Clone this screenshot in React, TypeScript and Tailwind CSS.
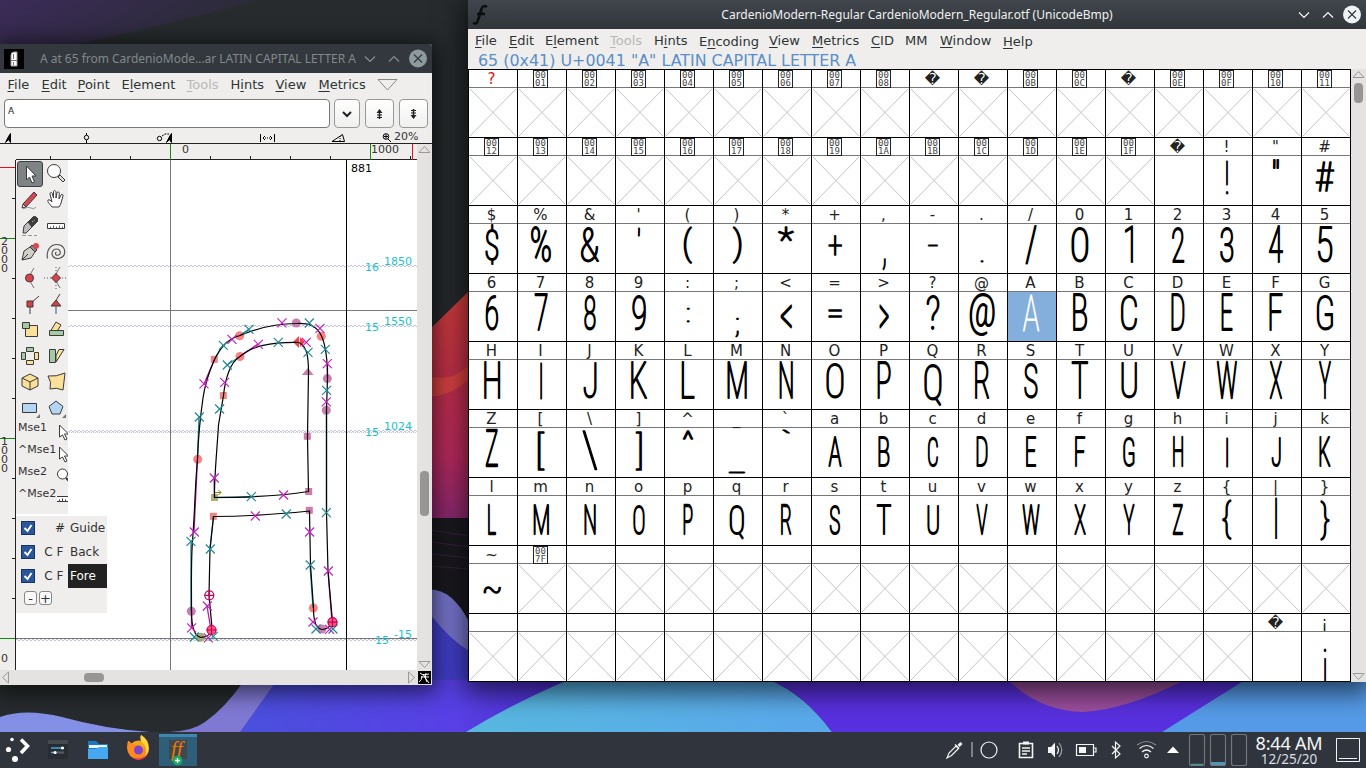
import React from "react";

type Box = { w: number; top: number; bottom: number; cx?: number };

const MENU_FONT = "font-['DejaVu_Sans',sans-serif]";

/* ---------- glyph metrics for the font overview ---------- */

const capWidths: Record<string, number> = {
  A: 17, B: 15, C: 17, D: 14, E: 12, F: 14, G: 17, H: 17, I: 2.5, J: 14, K: 17, L: 14, M: 20,
  N: 14, O: 18, P: 14, Q: 18, R: 15, S: 14, T: 17, U: 16, V: 16, W: 21, X: 13, Y: 13, Z: 13,
  "0": 18, "1": 9, "2": 13, "3": 14, "4": 15, "5": 15, "6": 13, "7": 14, "8": 12, "9": 14,
};
const smallWidths: Record<string, number> = {
  a: 14, b: 12, c: 11, d: 12, e: 11, f: 11, g: 12, h: 11, i: 2.5, j: 10, k: 12, l: 9, m: 16,
  n: 12, o: 12, p: 10, q: 15, r: 11, s: 11, t: 15, u: 12, v: 12, w: 18, x: 12, y: 12, z: 11,
};
const special: Record<string, Box> = {
  "!": { w: 3, top: 4, bottom: 39 },
  '"': { w: 7, top: 2, bottom: 12 },
  "#": { w: 19, top: 5, bottom: 36 },
  $: { w: 14, top: 1, bottom: 41 },
  "%": { w: 21, top: 1, bottom: 39 },
  "&": { w: 19, top: 3, bottom: 39 },
  "'": { w: 2.5, top: 3, bottom: 12 },
  "(": { w: 9, top: 3, bottom: 40 },
  ")": { w: 9, top: 3, bottom: 40 },
  "*": { w: 17, top: 2, bottom: 18 },
  "+": { w: 14, top: 12, bottom: 33 },
  ",": { w: 4, top: 34, bottom: 46 },
  "-": { w: 10, top: 21, bottom: 23.5 },
  ".": { w: 3, top: 35.5, bottom: 38.5 },
  "/": { w: 12, top: 1, bottom: 40 },
  ":": { w: 3, top: 16, bottom: 31 },
  ";": { w: 4, top: 26, bottom: 46 },
  "<": { w: 12, top: 13, bottom: 37 },
  "=": { w: 14, top: 17, bottom: 26 },
  ">": { w: 10, top: 13, bottom: 37 },
  "?": { w: 13, top: 2, bottom: 39 },
  "@": { w: 26, top: 1, bottom: 45 },
  Q: { w: 18, top: 3, bottom: 46 },
  q: { w: 15, top: 8.5, bottom: 44 },
  "[": { w: 7, top: 3, bottom: 43 },
  "\\": { w: 15, top: 2, bottom: 43 },
  "]": { w: 7, top: 3, bottom: 43 },
  "^": { w: 11, top: 2, bottom: 12 },
  _: { w: 17, top: 43, bottom: 45 },
  "`": { w: 8, top: 1, bottom: 6 },
  "{": { w: 10, top: 3, bottom: 44 },
  "|": { w: 2.5, top: 1, bottom: 43 },
  "}": { w: 10, top: 3, bottom: 44 },
  "~": { w: 18, top: 22, bottom: 30 },
  "¡": { w: 3, top: 16, bottom: 53 },
};

function boxFor(ch: string): Box {
  if (special[ch]) return special[ch];
  if (smallWidths[ch]) return { w: smallWidths[ch], top: 8.5, bottom: 39 };
  return { w: capWidths[ch] ?? 14, top: 2, bottom: 39 };
}

let ctx: CanvasRenderingContext2D | null = null;

function BigGlyph({ ch, light }: { ch: string; light?: boolean }) {
  const drawn = smallWidths[ch] ? ch.toUpperCase() : ch;
  const b = boxFor(ch);
  const narrow = b.w <= 4;
  const stroke = light ? 0.8 : narrow ? 1 : 1.65;
  if (!ctx) ctx = document.createElement("canvas").getContext("2d");
  ctx!.font = "100 500px 'Roboto Condensed'";
  const m = ctx!.measureText(drawn);
  const left = m.actualBoundingBoxLeft / 10;
  const right = m.actualBoundingBoxRight / 10;
  const up = m.actualBoundingBoxAscent / 10;
  const down = m.actualBoundingBoxDescent / 10;
  const sx = narrow ? 0.65 : (b.w - stroke) / Math.max(1, left + right);
  const sy = Math.max(0.8, b.bottom - b.top - stroke) / Math.max(1, up + down);
  const cx = b.cx ?? 23;
  const tx = cx - ((right - left) / 2) * sx;
  const ty = b.top + stroke / 2 + up * sy;
  const color = light ? "#ffffff" : "#000000";
  return (
    <svg width="48" height="49" className="block overflow-hidden">
      <text
        transform={`translate(${tx} ${ty}) scale(${sx} ${sy})`}
        fontFamily="'Roboto Condensed', Inter, sans-serif"
        fontWeight="100"
        fontSize="50"
        fill={color}
        stroke={color}
        strokeWidth={stroke / Math.sqrt(sx * sy)}
        strokeLinejoin="round"
      >
        {drawn}
      </text>
    </svg>
  );
}

function Cross() {
  return (
    <svg width="48" height="49" className="block" stroke="#c4c4c4" strokeWidth="1">
      <path d="M1 1L47 48M47 1L1 48" />
    </svg>
  );
}

/* ---------- font overview cells ---------- */

type Cell = { label: string; kind: "hex" | "char" | "none"; glyph?: string; red?: boolean };

function cellFor(row: number, col: number): Cell {
  const code = row * 18 + col;
  if (row === 8) {
    if (col === 16) return { label: "\uFFFD", kind: "char", glyph: " " };
    if (col === 17) return { label: "¡", kind: "char", glyph: "¡" };
    return { label: "", kind: "none" };
  }
  if (code === 0) return { label: "?", kind: "char", red: true };
  if (code === 9 || code === 10 || code === 13) return { label: "\uFFFD", kind: "char" };
  if (code === 32) return { label: "\uFFFD", kind: "char", glyph: " " };
  if (code < 32 || code === 127) return { label: code.toString(16).toUpperCase().padStart(2, "0"), kind: "hex" };
  if (code < 127) return { label: String.fromCharCode(code), kind: "char", glyph: String.fromCharCode(code) };
  return { label: "", kind: "none" };
}

function FontCell({ row, col }: { row: number; col: number }) {
  const c = cellFor(row, col);
  const selected = c.glyph === "A";
  return (
    <div className="h-[68px] w-[49px] border-t border-r border-black">
      <div className="flex h-[17px] w-[45px] items-start justify-center">
        {c.kind === "hex" && (
          <span className="relative flex h-[18px] w-[15px] shrink-0 flex-col items-center justify-center border border-[#222] font-['DejaVu_Sans_Mono',monospace] text-[9px] leading-[8px] text-[#444]">
            <span>00</span>
            <span>{c.label}</span>
          </span>
        )}
        {c.kind === "char" && (
          <span className={`${MENU_FONT} text-[15px] leading-[18px] ${c.red ? "text-[#e01010]" : "text-[#222]"}`}>{c.label}</span>
        )}
      </div>
      <div className={`h-[50px] border-t border-[#777] ${selected ? "bg-[#84aedb]" : ""}`}>
        {c.glyph === undefined ? <Cross /> : c.glyph === " " ? null : <BigGlyph ch={c.glyph} light={selected} />}
      </div>
    </div>
  );
}

/* ---------- shared window parts ---------- */

function MenuItem({ text, u, cls, off, low }: { text: string; u: number; cls: string; off?: boolean; low?: boolean }) {
  return (
    <span className={`${MENU_FONT} ${cls} shrink-0 text-[13px] leading-[23px] whitespace-nowrap ${off ? "text-[#b9b8b7]" : "text-[#2e3436]"} ${low ? "pt-px" : ""}`}>
      {text.slice(0, u)}
      <span className={u >= 0 && u < text.length ? "underline decoration-1 underline-offset-2" : ""}>{text.slice(u, u + 1)}</span>
      {text.slice(u + 1)}
    </span>
  );
}

function TitleButtons({ dim }: { dim?: boolean }) {
  const c = dim ? "#8a9094" : "#fcfcfc";
  return (
    <svg width="72" height="24" className="shrink-0" fill="none" stroke={c} strokeWidth="1.1">
      <path d="M7 9.500l5 5 5-5M31 14.500l5-5 5 5" />
      <circle cx="60" cy="11.500" r="9" fill={dim ? "#8f9a9e" : "#eff3f6"} stroke="none" />
      <path d="M56 7.500l8 8M64 7.500l-8 8" stroke="#30363a" />
    </svg>
  );
}

/* ---------- tool palette ---------- */

const O = "#3a3a3a";
const toolIcons: React.ReactNode[] = [
  <path d="M8.500 4v14l3-3 2.500 6 2.500-1-2.500-6h4z" fill="#fff" stroke={O} />,
  <g stroke={O}><circle cx="10" cy="9" r="6.500" fill="#fff" /><path d="M14 15l2-2 5 5-2 2z" fill="#ddd" /></g>,
  <g stroke={O}><path d="M5 16L16 4l3 3L8 19z" fill="#d94850" /><path d="M5 16l3 3-4 1z" fill="#fbe6c0" /><path d="M5 21q5-3 8-1t5-1" fill="none" stroke="#8a97aa" /></g>,
  <path d="M8 19c-2-3-5-5-4-7 1-1 3 1 4 2L6 6c0-2 2-2 2.500 0l1 4V4c0-2 2-2 2.500 0v6l1-5c.5-2 2.500-1 2.300.5L15 11l2-4c1-1.500 2.500-.5 2 1-1.500 4-1.500 8-4 11z" fill="#fff" stroke={O} />,
  <g stroke={O}><path d="M5 19l1-7 9-9c3-1 5 1 4.500 4L12 15l-4 4z" fill="#bdbdbd" /><path d="M10 8l5-5c3-1 5 1 4.500 4L14 13z" fill="#3c3c3c" /><path d="M14 8l3-2" stroke="#ccc" strokeDasharray="1 1" /><path d="M4 21.500h15" stroke="#999" strokeDasharray="4 2" /></g>,
  <g stroke={O}><path d="M3.500 9.500h17v5h-17z" fill="#fff" /><path d="M6.500 12.500v2M9.500 11.500v3M12.500 12.500v2M15.500 11.500v3M18.500 12.500v2" strokeWidth=".8" /></g>,
  <g stroke={O}><path d="M4 20l2-9 6-4 5 5-4 6z" fill="#d0d0c8" /><path d="M4 20l6-6" /><path d="M12 7l5 5 2-2-5-5z" fill="#888" /><circle cx="18" cy="6" r="3" fill="#d94850" stroke="none" /></g>,
  <path d="M3.500 18.500C2 11 6 4.500 13 4.500c6 0 8.500 5 7.500 9-1 5-8 6.500-11 3.500s-1-8 3-8 5 5 2 6-4-2-2-3" fill="none" stroke="#555" strokeWidth="1.200" />,
  <g stroke={O} fill="none"><path d="M16 2q-8 10 0 20" stroke="#777" /><circle cx="11.500" cy="12" r="4" fill="#e0404c" /></g>,
  <g stroke={O} fill="none"><path d="M16 1q-8 10 0 21" stroke="#777" /><path d="M0 12h24M12 1v22" stroke="#555" strokeDasharray="1 2" /><path d="M12 7.500l4.500 4.500-4.500 4.500L7.500 12z" fill="#e0404c" /></g>,
  <g stroke={O} fill="none"><path d="M12 12v10M12 12l9-8" /><path d="M9 9h6v6H9z" fill="#d83c48" /></g>,
  <g stroke={O} fill="none"><path d="M12 12v10" stroke="#27548c" /><path d="M12 12q0-6 4-10" /><path d="M12 8l5 6H7z" fill="#d83c48" /></g>,
  <g stroke={O}><path d="M7.500 7.500h12v11h-12z" fill="#fbe09a" /><path d="M4.500 4.500h7v6h-7z" fill="#a5cba5" /></g>,
  <g stroke={O}><path d="M6 14l6-10 5 3-5 8z" fill="#fbe09a" /><path d="M5.500 12.500h14v5h-14z" fill="#a5cba5" /></g>,
  <g stroke={O}><path d="M8.500 3.500h7v4h-7zM3.500 8.500h4v7h-4z" fill="#a5cba5" /><path d="M16.500 8.500h4v7h-4zM8.500 16.500h7v4h-7z" fill="#fbe09a" /></g>,
  <g stroke={O}><path d="M5.500 5.500h6v13h-6z" fill="#a5cba5" /><path d="M12 18l8-12.500h-5l-3 6z" fill="#fbe09a" /></g>,
  <g stroke={O}><path d="M12 4l8 4v8l-8 4-8-4V8z" fill="#fbe09a" /><path d="M4 8l8 4 8-4M12 12v8" fill="none" /></g>,
  <path d="M4 6q8 1 17-3l-2 17q-7-3-13-1 2-7-2-13z" fill="#fbe09a" stroke={O} />,
  <g><path d="M4.500 7.500h14v9h-14z" fill="#b4d6f5" stroke={O} /><path d="M22 18v4h-4z" fill="#777" /></g>,
  <g><path d="M12 5l7 5.500-3 7.500H8l-3-7.500z" fill="#b4d6f5" stroke={O} /><path d="M22 18v4h-4z" fill="#777" /></g>,
];

function ToolPalette() {
  return (
    <div className="h-[354px] w-[52px] overflow-hidden bg-[#efeeed] pt-px">
      <div className="grid grid-cols-2 pl-px">
        {toolIcons.map((icon, i) => (
          <div key={i} className={`flex h-[26px] w-[26px] items-center justify-center rounded-[3px] ${i === 0 ? "border border-[#3a3e42] bg-[#7e8386]" : ""}`}>
            <svg width="24" height="24" viewBox="0 0 24 24" className="shrink-0">{icon}</svg>
          </div>
        ))}
      </div>
      {["Mse1", "^Mse1", "Mse2", "^Mse2"].map((t, i) => (
        <div key={t} className="flex h-[22px] w-[60px] items-start pl-[2px]">
          <span className={`${MENU_FONT} w-[39px] shrink-0 text-[11px] leading-[14px] text-[#333]`}>{t}</span>
          <svg width="18" height="20" viewBox="0 0 18 20" className="shrink-0" fill="#fff" stroke="#3a3a3a">
            {i < 2 && <path d="M2.500 4v12l3-2 2.500 5 2-1-2.500-5h4z" />}
            {i === 2 && <><circle cx="5.500" cy="9" r="5" /><path d="M9 13l5 5" strokeWidth="2" /></>}
            {i === 3 && <path d="M-.5 9.500h16v5h-16zM2.500 12.500v2M5.500 11.500v3M8.500 12.500v2" />}
          </svg>
        </div>
      ))}
    </div>
  );
}

function LayerPalette() {
  const rows = [["", "#", "Guide"], ["C", "F", "Back"], ["C", "F", "Fore"]];
  return (
    <div className={`${MENU_FONT} h-[97px] w-[91px] bg-[#efeeed] text-[12px] text-[#333]`}>
      {rows.map(([a, b, c]) => (
        <div key={c} className="flex h-[24px] items-center pl-[5px]">
          <svg width="14" height="14" className="shrink-0">
            <rect x=".5" y=".5" width="13" height="13" fill="#2a5599" stroke="#17345f" />
            <path d="M3.500 7l3 3 4-6" fill="none" stroke="#fff" strokeWidth="2" />
          </svg>
          <span className="ml-[7px] w-[13px] text-center">{a}</span>
          <span className="w-[10px] text-center">{b}</span>
          <span className={`ml-[3px] flex h-[24px] w-[39px] items-center pl-[2px] whitespace-nowrap ${c === "Fore" ? "bg-[#222] text-white" : ""}`}>{c}</span>
        </div>
      ))}
      <div className="flex gap-[2px] pt-[3px] pl-[8px]">
        {["-", "+"].map((s) => (
          <span key={s} className="flex h-[14px] w-[13px] items-center justify-center rounded-[3px] border border-[#888] bg-[#f8f8f8] text-[13px] leading-none">{s}</span>
        ))}
      </div>
    </div>
  );
}

/* ---------- outline canvas (drawn in desktop coordinates) ---------- */

const magentaX = [[281.7,322.5],[319.7,328],[231.7,339],[258,344],[203.7,383.5],[224.3,382],[327,363.3],[326,401.5],[306,342],[214,477.7],[283.3,494.7],[255,515.7],[194,531.7],[309.3,531.7],[328,570.7],[207,605.7],[191.3,627.5],[312.7,621.7],[208,637.5],[329.3,629]];
const tealX = [[248.7,329],[309,322.7],[223,345],[227,364.7],[278,342],[307.7,352],[325,349],[326.3,390],[199,416.7],[219.3,408.7],[251,496.3],[286,513.7],[190.7,541],[210,548.7],[310,564.7],[326,512.3],[194,636.7],[213,636],[315.7,628.7],[332.7,628.7]];
const redDots = [[239.7,335.7],[240,356.5],[321.3,336.3],[197.7,459.3],[313.3,608]];
const pinkDots = [[296.3,323],[327.3,378.6],[326.3,410.3],[191.3,611.3],[322,629]];
const redSq = [[214.3,359.3],[223.3,395.5],[213.3,516.3]];
const pinkSq = [[307.3,436.3],[308.7,491.5],[309.3,510.3]];

function Canvas() {
  return (
    <svg width="401" height="510" viewBox="16 160 401 510" className="block bg-white">
      <g shapeRendering="crispEdges" fill="none">
        {[266, 326, 431, 639].map((y) => (
          <g key={y}>
            <path d={`M16 ${y + 0.5}H417`} stroke="#c4c4e0" strokeDasharray="2 2" />
            <path d={`M18 ${y + (y === 639 ? 1.5 : -0.5)}H417`} stroke="#c4c4e0" strokeDasharray="2 2" />
          </g>
        ))}
        <path d="M17 432.500H417" stroke="#c4c4e0" strokeDasharray="1 1" />
        <path d="M16 310.500H417M16 638.500H417M170.500 160V670" stroke="#777" />
        <path d="M346.500 160V670" stroke="#000" />
      </g>
      {redSq.map(([x, y], i) => <rect key={i} x={x - 3.5} y={y - 3.5} width="7" height="7" fill="#f08585" />)}
      {pinkSq.map(([x, y], i) => <rect key={i} x={x - 3.5} y={y - 3.5} width="7" height="7" fill="#cf7bad" />)}
      <rect x="211" y="494" width="7" height="7" fill="#b1b072" />
      {redDots.map(([x, y], i) => <circle key={i} cx={x} cy={y} r="4.500" fill="#ff8080" />)}
      {pinkDots.map(([x, y], i) => <circle key={i} cx={x} cy={y} r="4.500" fill="#cd7db0" />)}
      <circle cx="200.500" cy="637.300" r="4.500" fill="#a9a878" />
      <path d="M307.700 368l6 7h-12z" fill="#cd7db0" />
      <path d="M299 336l6 6-6 6-6-6z" fill="#f33f50" />
      <path d="M299.500 336v12" stroke="#fff" />
      <g fill="none" strokeWidth="1.300">
        <path d="M214.500 359.500L204 384M258 344L240 356.500M214.500 497L214 478M197.500 459L194 532M328 571L332 622M207 606L211 630M191.500 611V627M327.500 378V363" stroke="#b51aa8" />
        <path d="M240 335.500L249 329M214.500 359.500L223 345M240 356.500L227 365M199 417L197.500 459M191 541V611M326.500 410V512M214.500 497.500L251 497M310 565L313 608M213.500 516.500L210 549" stroke="#178b96" />
      </g>
      <g fill="none" stroke="#000" strokeWidth="1.200">
        <path d="M191.500 611C191.500 580 191 560 192.500 541C195 510 195 485 197.500 459C198.500 430 201 412 203 398C205 384 209 372 214.500 359.500C221 346 230 338 240 335.500C260 327 280 323.500 296.500 323.500C309 323 317 326 321.500 336C326 346 327.500 360 327.500 378L326.500 410V512L328 571L332.500 622C330 627 327 629.500 322 629.500C316 628 313.500 622 313.500 608L310.500 565L309.500 511C280 514 250 516.500 213.500 516.500L210 549L209 595L212 628C211 635 207 637.500 200.500 637.300C194 636 191.500 625 191.500 611Z" />
        <path d="M214.500 497.500C214 480 217 450 218.500 425L223.500 395.500C225 380 230 362 240 356.500C252 346 270 342 299 342.500C306 346 308.500 354 308.500 372L307.500 437L308.500 491.500C280 496 250 497.500 214.500 497.500Z" />
      </g>
      <g stroke="#c51fc0" strokeWidth="1.150">{magentaX.map(([x, y], i) => <path key={i} d={`M${x - 4.2} ${y - 4.2}l9 9m0-9l-9 9`} />)}</g>
      <g stroke="#1e8796" strokeWidth="1.150">{tealX.map(([x, y], i) => <path key={i} d={`M${x - 4.2} ${y - 4.2}l9 9m0-9l-9 9`} />)}</g>
      <g stroke="#c40062" strokeWidth="1.200">
        <circle cx="209.300" cy="595.300" r="4.500" fill="none" />
        <circle cx="211.500" cy="630" r="4.500" fill="#ff5a78" />
        <circle cx="332.500" cy="622.200" r="4.500" fill="#ff5a78" />
        <path d="M204.500 595.300h9.600M209.300 590.500v9.600M206.500 630h10M211.500 625v10M327.500 622.200h10M332.500 617v10" />
      </g>
      <path d="M215 492.500h6m-2.500-2.500l2.500 2.500-2.500 2.500" stroke="#8a8400" fill="none" />
      <g fontFamily="DejaVu Sans" fontSize="11" fill="#19c3cc">
        <text x="365" y="271">16</text><text x="384" y="265">1850</text>
        <text x="365" y="331">15</text><text x="384" y="325">1550</text>
        <text x="365" y="436">15</text><text x="384" y="430">1024</text>
        <text x="375" y="644">15</text><text x="394" y="638">-15</text>
        <text x="351" y="172" fill="#000">881</text>
      </g>
    </svg>
  );
}

function TopRuler() {
  return (
    <svg width="417" height="16" viewBox="0 144 417 16" className="block" shapeRendering="crispEdges">
      <path d="M16 159.500H417M50.500 156v3M90.500 156v3M130.500 156v3M210.500 156v3M250.500 156v3M290.500 156v3M330.500 156v3M410.500 156v3" stroke="#222" />
      <path d="M170.500 144v16M370.500 144v16" stroke="#118a11" />
      <path d="M412.500 144v16" stroke="#e01020" />
      <g fontFamily="DejaVu Sans" fontSize="11" fill="#333"><text x="182" y="153">0</text><text x="371" y="153">1000</text></g>
    </svg>
  );
}

function SideRuler() {
  return (
    <svg width="16" height="510" viewBox="0 160 16 510" className="block" shapeRendering="crispEdges">
      <path d="M15.500 160V670M12 198.500h3M12 278.500h3M12 318.500h3M12 358.500h3M12 398.500h3M12 478.500h3M12 518.500h3M12 558.500h3M12 598.500h3" stroke="#222" />
      <path d="M0 238.500h15M0 438.500h15M0 638.500h15" stroke="#118a11" />
      <path d="M0 167.500h15" stroke="#e01020" />
      <g fontFamily="DejaVu Sans" fontSize="11" fill="#333">
        <text x="1" y="245">2</text><text x="1" y="254">0</text><text x="1" y="263">0</text><text x="1" y="272">0</text>
        <text x="1" y="445">1</text><text x="1" y="454">0</text><text x="1" y="463">0</text><text x="1" y="472">0</text>
        <text x="1" y="662">0</text>
      </g>
    </svg>
  );
}

function InfoStrip() {
  return (
    <div className="flex h-[16px] shrink-0 border-b border-[#222]">
      <svg width="392" height="15" viewBox="0 128 392 15" className="block shrink-0" fill="none" stroke="#000">
        <path d="M10.500 133.500v9l-2-3-3 3 3-6z" fill="#000" />
        <path d="M86.500 133v2M86.500 140v3" /><circle cx="86.500" cy="137.500" r="2.200" />
        <circle cx="159.500" cy="138.500" r="2.200" /><path d="M162 136l3-2h4" strokeDasharray="2 1" /><path d="M171.500 133.500v9l-2-3-3 3 3-6z" fill="#000" />
        <path d="M260.500 134v8M274.500 134v8" /><path d="M263 138h10" strokeDasharray="1 1" /><path d="M265 136l-2 2 2 2M270 136l2 2-2 2" />
        <path d="M332 141.500h12.500l-2-7z" /><path d="M340 136v5" strokeDasharray="1 1" />
        <circle cx="386" cy="136.500" r="2.800" /><path d="M384 136.500h4M386 134.500v4M388 139l3 3" />
      </svg>
      <span className={`${MENU_FONT} ml-[2px] pt-[2px] text-[11px] leading-[14px] text-[#333]`}>20%</span>
    </div>
  );
}

function GlyphWindow() {
  const btn = "flex h-[29px] items-center justify-center rounded-[4px] border border-[#9a9996] bg-gradient-to-b from-white to-[#f0f0ef]";
  return (
    <div className="absolute top-[44px] left-0 flex h-[641px] w-[432px] flex-col overflow-hidden rounded-tr-[3px] bg-[#efeeec] shadow-[0_3px_22px_5px_rgba(0,0,0,0.6)]">
      <div className="flex h-[29px] shrink-0 items-center bg-[#32383d] pl-[4px]">
        <svg width="20" height="20" className="shrink-0"><rect width="20" height="20" fill="#000" /><path d="M7 17V6q0-3 3-3h3v14z" fill="#fff" stroke="#999" /><path d="M9.500 5v5M9.500 13v3M7 11.500h6" stroke="#777" /></svg>
        <span className="ml-[16px] w-[318px] shrink-0 font-['Noto_Sans',sans-serif] text-[12px] leading-[20px] tracking-[-0.02px] whitespace-nowrap text-[#82888c]">A at 65 from CardenioMode...ar LATIN CAPITAL LETTER A</span>
        <TitleButtons dim />
      </div>
      <div className="flex h-[24px] shrink-0 pl-[7.5px]">
        <MenuItem text="File" u={0} cls="w-[34px]" />
        <MenuItem text="Edit" u={0} cls="w-[36px]" />
        <MenuItem text="Point" u={0} cls="w-[44px]" />
        <MenuItem text="Element" u={1} cls="w-[65px]" />
        <MenuItem text="Tools" u={0} cls="w-[44px]" off />
        <MenuItem text="Hints" u={1} cls="w-[45px]" />
        <MenuItem text="View" u={0} cls="w-[43px]" />
        <MenuItem text="Metrics" u={0} cls="w-[57.5px]" />
        <svg width="24" height="22" fill="none" stroke="#888"><path d="M2 6.500h19l-9.500 10.500z" /></svg>
      </div>
      <div className="flex h-[31px] shrink-0 items-start gap-[4px] pt-[2px] pl-[4px]">
        <div className={`${MENU_FONT} h-[29px] w-[326px] rounded-[4px] border border-[#777] bg-white pl-[3px] text-[9px] leading-[22px] text-[#222]`}>A</div>
        <div className={`${btn} w-[26px]`}><svg width="12" height="12" fill="none" stroke="#222" strokeWidth="2"><path d="M2 4l4 4 4-4" /></svg></div>
        <div className={`${btn} ml-[1px] w-[29px]`}><svg width="9" height="12" fill="none" stroke="#222"><path d="M4.500 2v9" strokeWidth="1.500" /><path d="M1.500 5h6l-3-4z" fill="#222" stroke="none" /><path d="M2 7h5M2 9.500h5" /></svg></div>
        <div className={`${btn} ml-[1px] w-[29px]`}><svg width="9" height="12" fill="none" stroke="#222"><path d="M4.500 1v9" strokeWidth="1.500" /><path d="M1.500 7h6l-3 4z" fill="#222" stroke="none" /><path d="M2 2.500h5M2 5h5" /></svg></div>
      </div>
      <InfoStrip />
      <div className="flex h-[526px] shrink-0">
        <div className="w-[417px]">
          <TopRuler />
          <div className="flex">
            <SideRuler />
            <div className="relative">
              <Canvas />
              <div className="absolute top-0 left-0"><ToolPalette /></div>
              <div className="absolute top-[356px] left-0"><LayerPalette /></div>
            </div>
          </div>
        </div>
        <svg width="15" height="526" viewBox="417 144 15 526" className="block bg-[#e4e3e1]" fill="none" stroke="#999">
          <path d="M419 152.500h11l-5.500-6zM419 661.500h11l-5.500 6z" />
          <rect x="420" y="471" width="9" height="45" rx="4" fill="#979695" stroke="none" />
        </svg>
      </div>
      <svg width="432" height="15" viewBox="0 670 432 15" className="block bg-[#e4e3e1]" fill="none" stroke="#999">
        <path d="M8.500 672v11l-6-5.500zM408.500 672v11l6-5.500z" />
        <rect x="84" y="673" width="20" height="9" rx="4" fill="#979695" stroke="none" />
        <rect x="418" y="671" width="13" height="13" fill="#000" stroke="none" />
        <path d="M420 673l3 2 6-1M421 677h8M423 674q2 4 6 9M426 673q-2 5 1 9M419 682q3-2 3-6" stroke="#fff" />
      </svg>
    </div>
  );
}

function OverviewWindow() {
  return (
    <div className="absolute top-0 left-[468px] flex h-[682px] w-[898px] flex-col bg-[#efeeec] shadow-[0_6px_24px_5px_rgba(0,0,0,0.6)]">
      <div className="flex h-[29px] shrink-0 items-center bg-gradient-to-b from-[#40464c] to-[#31363b]">
        <svg width="24" height="24" className="shrink-0" fill="none" stroke="#0c0d0e" strokeWidth="2.500">
          <path d="M19 4q-4-3-6 3l-3 10q-1 5-5 3M9 11h8" /><path d="M15 8q-3 2-4 9" strokeWidth="1" />
        </svg>
        <span className="w-[800px] shrink-0 pl-[50px] text-center font-['Noto_Sans',sans-serif] text-[12px] whitespace-nowrap text-[#eff0f1]">CardenioModern-Regular CardenioModern_Regular.otf (UnicodeBmp)</span>
        <TitleButtons />
      </div>
      <div className="flex h-[23px] shrink-0 pl-[7px]">
        <MenuItem text="File" u={0} cls="w-[34px]" />
        <MenuItem text="Edit" u={0} cls="w-[36px]" />
        <MenuItem text="Element" u={1} cls="w-[65px]" />
        <MenuItem text="Tools" u={0} cls="w-[44px]" off />
        <MenuItem text="Hints" u={1} cls="w-[45px]" />
        <MenuItem text="Encoding" u={1} cls="w-[70px]" low />
        <MenuItem text="View" u={0} cls="w-[43px]" />
        <MenuItem text="Metrics" u={0} cls="w-[59px]" />
        <MenuItem text="CID" u={0} cls="w-[34px]" />
        <MenuItem text="MM" u={9} cls="w-[35px]" />
        <MenuItem text="Window" u={0} cls="w-[63px]" />
        <MenuItem text="Help" u={0} cls="w-[40px]" low />
      </div>
      <div className={`${MENU_FONT} h-[17px] shrink-0 pl-[10px] text-[15.9px] leading-[18px] whitespace-nowrap text-[#5a8ec8]`}>65 (0x41) U+0041 "A" LATIN CAPITAL LETTER A</div>
      <div className="flex">
        <div className="grid w-[883px] grid-cols-[repeat(18,49px)] border-b border-l border-black bg-white">
          {Array.from({ length: 162 }, (_, i) => <FontCell key={i} row={Math.floor(i / 18)} col={i % 18} />)}
        </div>
        <svg width="15" height="613" viewBox="1351 69 15 613" className="block bg-[#e4e3e1]" fill="none" stroke="#999">
          <path d="M1353 77.500h11l-5.500-6zM1353 673.500h11l-5.500 6z" />
          <rect x="1354" y="83" width="9" height="20" rx="4" fill="#979695" stroke="none" />
        </svg>
      </div>
    </div>
  );
}

/* ---------- desktop ---------- */

function Wallpaper() {
  return (
    <svg width="1366" height="732" className="absolute top-0 left-0">
      <defs>
        <linearGradient id="p" x1="0" y1="0" x2="1" y2=".3"><stop offset="0" stopColor="#3b2b58" /><stop offset="1" stopColor="#2a2b35" /></linearGradient>
        <linearGradient id="r" x1="0" y1="0" x2="0" y2="1"><stop offset="0" stopColor="#d8403c" /><stop offset=".35" stopColor="#c8324e" /><stop offset=".7" stopColor="#c02c62" /><stop offset="1" stopColor="#8c2a78" /></linearGradient>
        <linearGradient id="b" x1="0" y1="0" x2="1" y2="0"><stop offset="0" stopColor="#4a50dc" /><stop offset=".6" stopColor="#5840e6" /><stop offset="1" stopColor="#4a28cc" /></linearGradient>
        <linearGradient id="c" x1="0" y1="0" x2="1" y2="0"><stop offset="0" stopColor="#58b8e0" /><stop offset="1" stopColor="#5aa8ec" /></linearGradient>
      </defs>
      <rect width="1366" height="732" fill="#272b2d" />
      <path d="M0 0H260Q150 30 0 60Z" fill="url(#p)" />
      <path d="M468 292L425 334V525H468Z" fill="url(#r)" />
      <path d="M425 375Q450 384 468 366V380Q445 400 425 395Z" fill="#e04444" />
      <rect x="425" y="518" width="50" height="110" fill="#1b1a20" />
      <path d="M430 530l40 6M430 542l40 5M430 554l40 4M430 566l40 3" stroke="#3a2340" />
      <path d="M425 590Q450 586 468 620V660H425Z" fill="#7d7bd6" />
      <path d="M425 608Q450 640 468 650V732H425Z" fill="#4541d2" />
      <path d="M238 732L275 680H600V732Z" fill="url(#b)" />
      <path d="M0 732V717Q25 708 62 717Q105 729 150 732Z" fill="#8490e6" />
      <path d="M160 732Q190 733 205 722Q225 708 243 682L277 680L240 732Z" fill="#8079d4" />
      <path d="M466 732Q510 705 568 680H770Q805 695 832 732Z" fill="url(#c)" />
      <path d="M832 732Q805 695 770 680H1250L1162 732Z" fill="#5930df" />
      <path d="M1008 680Q1040 711 1083 712Q1125 710 1185 680Z" fill="#9b4f9e" />
      <path d="M1162 732L1245 680H1366V732Z" fill="#559be8" />
    </svg>
  );
}

function Taskbar() {
  return (
    <div className="flex h-[36px] items-center bg-[#30353d] text-[#f4f5f6]">
      <svg width="200" height="36" className="block">
        <g fill="#fff"><circle cx="12" cy="7.500" r="1.800" /><circle cx="8.500" cy="17.500" r="2.600" /><circle cx="15" cy="27" r="3" /></g>
        <path d="M21 7.500l6.500 6.500-6.500 7" fill="none" stroke="#fff" strokeWidth="3.500" />
        <rect x="48" y="8" width="20" height="19" fill="#292d31" /><rect x="48" y="8" width="20" height="4" fill="#454a50" />
        <path d="M51 16h13M51 20.500h13" stroke="#45a5dc" strokeWidth="1.500" /><path d="M56 20.500h8" stroke="#555b60" strokeWidth="1.500" /><circle cx="62.500" cy="16" r="1.600" fill="#fff" /><circle cx="55" cy="20.500" r="1.600" fill="#fff" />
        <path d="M88 9h8l3 3h9v15H88z" fill="#1879c5" /><path d="M89 13h18v3H89z" fill="#f1f1f1" /><path d="M88 17h8l3-2h9v12H88z" fill="#46a8f0" />
        <circle cx="138.500" cy="18" r="9.500" fill="#f7a61b" /><path d="M128.500 14q0 13 10 14 9-1 10-10l-3 4q-3 5-9 2-5-2-4-8z" fill="#ee3550" /><path d="M129 9l3 3 5 1-3 4 6 3 4-4V9l-3-2q-1-2 0-4 8 4 8 14 0 7-8 9-13 2-14-10 0-4 1-7z" fill="#ff8a20" /><path d="M141 3q-2 5 2 8 5 6 2 13 5-4 3-12-2-6-7-9z" fill="#ffd83c" /><circle cx="138.500" cy="18" r="4.500" fill="#8144c8" />
        <rect x="159" y="2" width="38" height="32" fill="#2f5e78" /><rect x="159" y="2" width="38" height="3" fill="#3f86b0" />
        <rect x="169" y="8" width="18" height="19" fill="#42484a" />
        <text x="171" y="23.500" fontFamily="Liberation Serif" fontStyle="italic" fontSize="21" fill="#e8790c">ff</text>
        <circle cx="177.500" cy="28.500" r="4.800" fill="#1aa960" /><path d="M175 28.500h5M177.500 26v5" stroke="#fff" strokeWidth="1.300" />
      </svg>
      <div className="grow" />
      <svg width="310" height="36" viewBox="940 732 310 36" className="block" fill="none" stroke="#f2f3f4" strokeWidth="1.200">
        <path d="M947 758l2-5 7-7 2.500 2.500-7 7z" /><path d="M955 744.500l4 4" strokeWidth="1.500" /><path d="M958.500 746l3-3" strokeWidth="3" />
        <path d="M972 742v15" stroke="#b4b7ba" />
        <circle cx="989" cy="750" r="8" />
        <path d="M1019.500 743.500h13v14h-13z" strokeWidth="1.600" /><path d="M1023 743h6" strokeWidth="3" /><path d="M1022 748h8M1022 751h8M1022 754h5" strokeWidth="1.300" />
        <path d="M1048 747h3l4-4.500v15l-4-4.500h-3z" fill="#f2f3f4" stroke="none" /><path d="M1057 746q3 4 0 8" /><path d="M1059 743q5.500 7 0 14" stroke="#9a9da0" />
        <path d="M1076.500 744.500h17v11h-17zM1094 748h2v4h-2" /><path d="M1079 747h7v6h-7z" fill="#f2f3f4" stroke="none" />
        <path d="M1112 746l8 8-4.500 4v-16l4.500 4-8 8" />
        <circle cx="1146.500" cy="756" r="1.800" /><path d="M1142 752q4.500-4 9 0M1139.500 748.500q7-6 14 0" /><path d="M1137 745q9.500-7 19 0" stroke="#8a8d92" />
        <path d="M1167 753l6-6.500 6 6.500z" fill="#fff" stroke="none" />
        {[1189.5, 1210.5, 1231.5].map((x) => <rect key={x} x={x} y="734.500" width="15" height="31" rx="2" stroke="#71767b" />)}
        <path d="M1191 764.500h12" stroke="#4d929c" strokeWidth="1.500" /><path d="M1211 763.500h14" stroke="#5596b8" strokeWidth="3" />
      </svg>
      <div className="flex w-[78px] flex-col items-center font-['Noto_Sans',sans-serif]">
        <span className="h-[17px] text-[18px] leading-[17px] tracking-[-0.2px] whitespace-nowrap">8:44 AM</span>
        <span className="h-[14px] text-[13.5px] leading-[14px] text-[#dcdee0]">12/25/20</span>
      </div>
      <svg width="38" height="36" fill="none" stroke="#f2f3f4"><path d="M8.500 6.500h23v23h-23zM11 26.500h18" /></svg>
    </div>
  );
}

export default function App() {
  return (
    <div className="flex h-[768px] w-[1366px] flex-col overflow-hidden bg-[#272b2d]">
      <div className="relative h-[732px] overflow-hidden">
        <Wallpaper />
        <GlyphWindow />
        <OverviewWindow />
      </div>
      <Taskbar />
    </div>
  );
}
